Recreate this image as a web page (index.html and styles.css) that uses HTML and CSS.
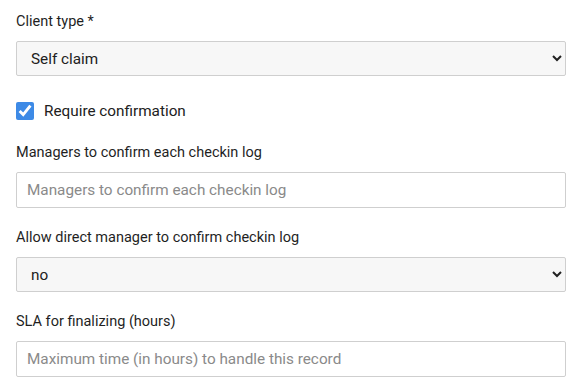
FILE: index.html
```html
<!DOCTYPE html>
<html lang="en">

<head>
    <meta charset="UTF-8">
    <meta content="width=device-width, initial-scale=1.0" name="viewport">
    <title>Checkin settings</title>
    <link rel="stylesheet" href="styles.css">
</head>

<body>

    <form class="form">
        <div class="field">
            <label class="field-label" for="clientType">Client type *</label>
            <select class="control control-select" id="clientType">
                <option>Self claim</option>
                <option>Manager claim</option>
            </select>
        </div>

        <!-- Confirmation toggle -->
        <label class="check">
            <input class="check-box" type="checkbox" checked>
            <span>Require confirmation</span>
        </label>

        <div class="field">
            <label class="field-label" for="managers">Managers to confirm each checkin log</label>
            <input class="control" id="managers" type="text" placeholder="Managers to confirm each checkin log">
        </div>

        <div class="field">
            <label class="field-label" for="directManager">Allow direct manager to confirm checkin log</label>
            <select class="control control-select" id="directManager">
                <option>no</option>
                <option>yes</option>
            </select>
        </div>

        <div class="field">
            <label class="field-label" for="sla">SLA for finalizing (hours)</label>
            <input class="control" id="sla" type="text" placeholder="Maximum time (in hours) to handle this record">
        </div>
    </form>

</body>

</html>
```

FILE: styles.css
```css
body {
    margin: 0;
    background: #ffffff;
    font-family: Roboto, "Noto Sans", sans-serif;
    color: #212121;
}

.form {
    padding: 12px 17px 0 16px;
}

.field {
    margin-bottom: 20px;
}

.field-label {
    display: block;
    font-size: 14.5px;
    font-weight: 400;
    line-height: 20px;
    margin-bottom: 9px;
    color: #1f1f1f;
}

.control {
    box-sizing: border-box;
    display: block;
    width: 100%;
    height: 36px;
    padding: 0 10px;
    border: 1px solid #cfcfcf;
    border-radius: 2px;
    background: #ffffff;
    font-family: inherit;
    font-size: 15.3px;
    color: #212121;
}

.control::placeholder {
    color: #8a8a8a;
}

.control-select {
    height: 35px;
    background: #f7f7f7;
    padding-left: 10px;
}

.check {
    display: flex;
    align-items: center;
    gap: 10px;
    height: 20px;
    margin: 25px 0 22px;
    font-size: 15.3px;
}

.check-box {
    width: 18px;
    height: 18px;
    margin: 0;
    accent-color: #3d8ae6;
}
```
